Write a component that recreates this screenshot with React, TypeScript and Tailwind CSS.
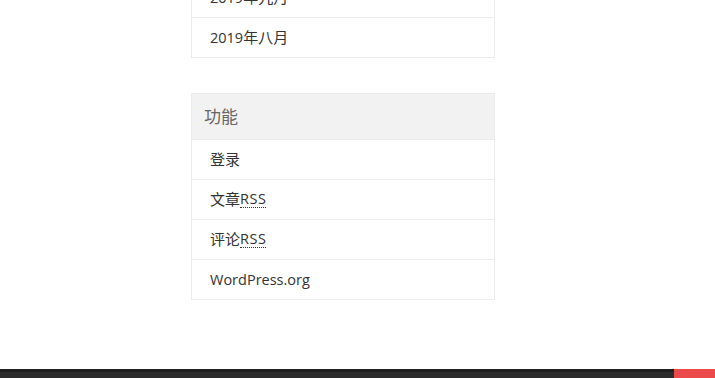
import React from "react";

const font = { fontFamily: '"Open Sans", "Noto Sans CJK SC", sans-serif' };

function Row({ children }: { children: React.ReactNode }) {
  return (
    <li className="h-[40px] flex items-center pl-[18px] border-b border-[#ebebeb] text-[14.5px] text-[#333]">
      {children}
    </li>
  );
}

function Zh({ children }: { children: React.ReactNode }) {
  return <span className="text-[15px]">{children}</span>;
}

function Rss() {
  return (
    <abbr className="no-underline border-b border-dotted border-[#333] leading-[16px] tracking-[0.5px]">
      RSS
    </abbr>
  );
}

export default function App() {
  return (
    <div className="w-[715px] h-[378px] overflow-hidden bg-white flex flex-col" style={font}>
      <div className="flex-1 pl-[191px]">
        <div className="w-[304px] -mt-[23px]">
          <ul className="border-x border-t border-[#ebebeb]">
            <Row>
              2019<Zh>年九月</Zh>
            </Row>
            <Row>
              2019<Zh>年八月</Zh>
            </Row>
          </ul>
          <div className="mt-[35px] border-x border-t border-[#ebebeb]">
            <h3 className="h-[46px] bg-[#f2f2f2] flex items-center pl-[12px] text-[17px] text-[#666] border-b border-[#ebebeb]">
              功能
            </h3>
            <ul>
              <Row>
                <Zh>登录</Zh>
              </Row>
              <Row>
                <Zh>文章</Zh>
                <Rss />
              </Row>
              <Row>
                <Zh>评论</Zh>
                <Rss />
              </Row>
              <Row>WordPress.org</Row>
            </ul>
          </div>
        </div>
      </div>
      <footer className="h-[9px] flex border-t-[3px] border-[#1f1f1f] bg-[#2c2c2c]">
        <div className="flex-1" />
        <div className="w-[41px] -mt-[3px] h-[12px] bg-[#ec4a4a]" />
      </footer>
    </div>
  );
}
